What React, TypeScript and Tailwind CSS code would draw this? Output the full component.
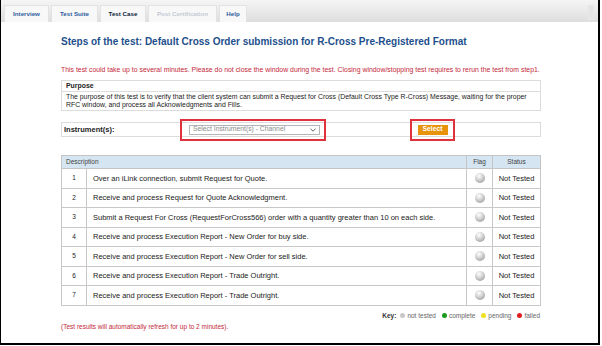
import React from "react";

interface Step {
  id: number;
  text: string;
}

const steps: Step[] = [
  { id: 1, text: "Over an iLink connection, submit Request for Quote." },
  { id: 2, text: "Receive and process Request for Quote Acknowledgment." },
  { id: 3, text: "Submit a Request For Cross (RequestForCross566) order with a quantity greater than 10 on each side." },
  { id: 4, text: "Receive and process Execution Report - New Order for buy side." },
  { id: 5, text: "Receive and process Execution Report - New Order for sell side." },
  { id: 6, text: "Receive and process Execution Report - Trade Outright." },
  { id: 7, text: "Receive and process Execution Report - Trade Outright." },
];

const tabs = [
  { name: "Interview", cls: "w-[45px] text-[#2f5f9e]" },
  { name: "Test Suite", cls: "w-[47px] text-[#2f5f9e]" },
  { name: "Test Case", cls: "w-[46px] bg-[#0a6fe2] border-[#0a6fe2] text-[#0d2340]" },
  { name: "Post Certification", cls: "w-[69px] text-[#c3cad3]" },
  { name: "Help", cls: "w-[28px] text-[#2f5f9e]" },
];

const Flag = () => (
  <span className="inline-block h-[10px] w-[10px] rounded-full bg-[radial-gradient(circle_at_40%_30%,#ffffff_0%,#cfcfcf_45%,#8a8a8a_100%)]" />
);

const App = () => {
  return (
    <div className="h-[346px] w-[602px] bg-white font-['Liberation_Sans',Arial,sans-serif]">
      <div className="flex h-[345px] w-[600px] flex-col border-b-2 border-l border-r-2 border-black">
        {/* tab bar */}
        <div className="flex h-[22px] items-end gap-[2px] bg-gradient-to-b from-[#f5f5f5] to-[#dedede] pl-[3px] pr-[4px]">
          {tabs.map((t) => (
            <div
              key={t.name}
              className={`flex h-[17px] items-center justify-center border border-b-0 border-[#e2e2e2] bg-[#f8f8f8] text-[6.2px] font-bold ${t.cls}`}
            >
              {t.name}
            </div>
          ))}
          <div className="ml-auto mb-[2px] h-[15px] w-[6px] border border-[#e8e8e8] bg-[#e4e4e4]" />
        </div>

        <div className="ml-[60px] w-[480px]">
          <h1 className="mt-[14px] whitespace-nowrap text-[10px] font-bold leading-[12px] text-[#1d4f8c]">
            Steps of the test: Default Cross Order submission for R-Cross Pre-Registered Format
          </h1>

          <p className="mt-[18px] whitespace-nowrap text-[6.9px] leading-[8px] text-[#c4283a]">
            This test could take up to several minutes. Please do not close the window during the test. Closing window/stopping test requires to rerun the test from step1.
          </p>

          {/* purpose */}
          <div className="mt-[6px] border border-[#dcdcdc] text-[6.9px] text-[#222]">
            <div className="flex h-[11px] items-center border-b border-[#dcdcdc] px-[4px] font-bold">Purpose</div>
            <div className="whitespace-nowrap px-[4px] py-[1px] leading-[8px]">
              The purpose of this test is to verify that the client system can submit a Request for Cross (Default Cross Type R-Cross) Message, waiting for the proper
              <br />
              RFC window, and process all Acknowledgments and Fills.
            </div>
          </div>

          {/* instrument */}
          <div className="mt-[11px] flex h-[15px] items-center border border-[#dcdcdc]">
            <span className="ml-[2px] w-[116px] text-[7.5px] font-bold text-[#222]">Instrument(s):</span>
            <div className="flex h-[22px] w-[146px] shrink-0 items-center border-2 border-[#e0323c] pl-[7px]">
              <div className="flex h-[10px] w-[131px] items-center justify-between border border-[#b5b5b5] bg-white px-[3px] text-[6.8px] text-[#8a8a8a]">
                <span>Select Instrument(s) - Channel</span>
                <svg width="6" height="4" viewBox="0 0 6 4" fill="none" stroke="#555" strokeWidth="0.9">
                  <path d="M0.5 0.8 L3 3.2 L5.5 0.8" />
                </svg>
              </div>
            </div>
            <div className="ml-[84px] flex h-[22px] w-[45px] shrink-0 items-center justify-center border-2 border-[#e0323c]">
              <div className="flex h-[10px] w-[30px] items-center justify-center bg-[#e8930c] text-[6.8px] font-bold text-white">
                Select
              </div>
            </div>
          </div>

          {/* steps */}
          <table className="mt-[18px] w-[480px] table-fixed border-collapse border border-[#bdbdbd] text-[7.5px] text-[#222]">
            <colgroup>
              <col className="w-[25px]" />
              <col />
              <col className="w-[26px]" />
              <col className="w-[48px]" />
            </colgroup>
            <thead>
              <tr className="h-[13px] bg-[#d5e5f1] text-[6.5px] text-[#444]">
                <th colSpan={2} className="border border-[#c4c4c4] px-[4px] text-left font-normal">Description</th>
                <th className="border border-[#c4c4c4] font-normal">Flag</th>
                <th className="border border-[#c4c4c4] font-normal">Status</th>
              </tr>
            </thead>
            <tbody>
              {steps.map((s) => (
                <tr key={s.id} className="h-[19.5px]">
                  <td className="border border-[#c8c8c8] text-center text-[6.5px]">{s.id}</td>
                  <td className="border border-[#c8c8c8] px-[6px]">{s.text}</td>
                  <td className="border border-[#c8c8c8] text-center">
                    <div className="flex items-center justify-center">
                      <Flag />
                    </div>
                  </td>
                  <td className="border border-[#c8c8c8] text-center">Not Tested</td>
                </tr>
              ))}
            </tbody>
          </table>

          {/* key */}
          <div className="mt-[5px] flex items-center justify-end gap-[2px] pr-[1px] text-[6.5px] text-[#666]">
            <span className="mr-[2px] font-bold text-[#333]">Key:</span>
            <span className="h-[5px] w-[5px] rounded-full bg-[#c8c8c8]" />
            <span className="mr-[4px]">not tested</span>
            <span className="h-[5px] w-[5px] rounded-full bg-[#1a9a1a]" />
            <span className="mr-[4px]">complete</span>
            <span className="h-[5px] w-[5px] rounded-full bg-[#f0e020]" />
            <span className="mr-[4px]">pending</span>
            <span className="h-[5px] w-[5px] rounded-full bg-[#e02020]" />
            <span>failed</span>
          </div>

          <p className="mt-[3px] text-[6.5px] leading-[8px] text-[#c4283a]">
            (Test results will automatically refresh for up to 2 minutes).
          </p>
        </div>
      </div>
    </div>
  );
};

export default App;
